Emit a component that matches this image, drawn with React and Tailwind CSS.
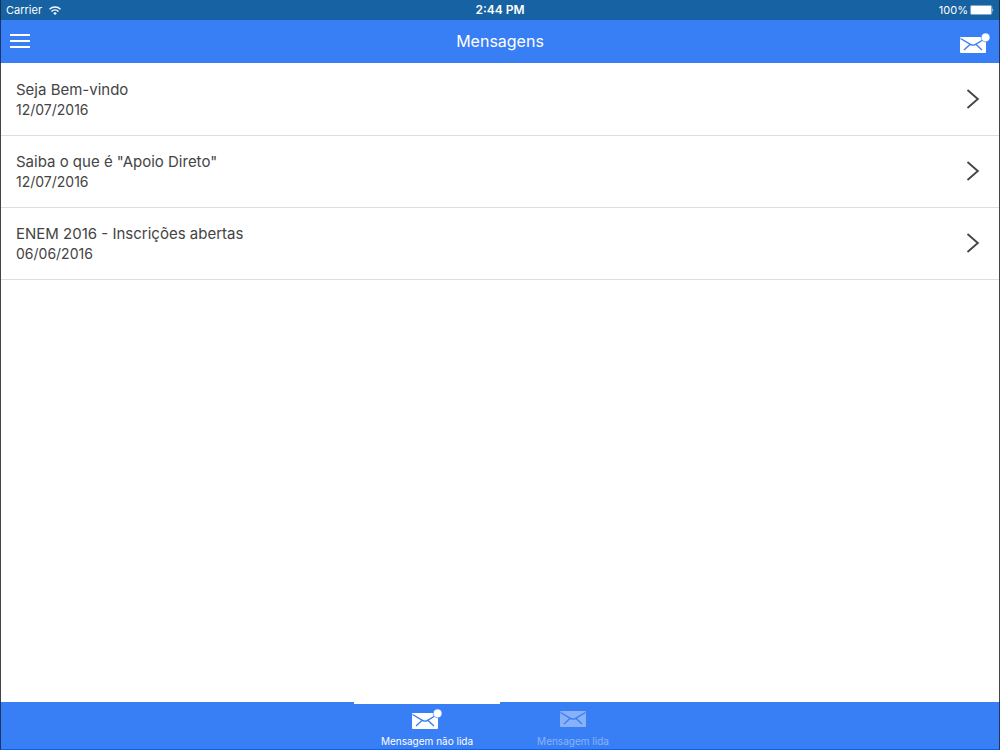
const messages = [
  { title: 'Seja Bem-vindo', date: '12/07/2016' },
  { title: 'Saiba o que é "Apoio Direto"', date: '12/07/2016' },
  { title: 'ENEM 2016 - Inscrições abertas', date: '06/06/2016' },
];

const tabs = [
  { label: 'Mensagem não lida', unread: true, active: true },
  { label: 'Mensagem lida', unread: false, active: false },
];

function Envelope() {
  return (
    <>
      <rect x="0" y="0" width="26" height="16" rx="1" fill="#fff" />
      <path
        d="M0.5 1.5 L10.5 7.4 Q13 9 15.5 7.4 L25.5 1.5 M4 13 L10.2 7.2 M22 13 L15.8 7.2"
        fill="none"
        stroke="#387ef5"
        strokeWidth="1.3"
      />
    </>
  );
}

function UnreadMailIcon() {
  return (
    <svg width="30" height="20" viewBox="0 0 30 20" aria-hidden="true">
      <g transform="translate(0 4)">
        <Envelope />
      </g>
      <circle cx="25.6" cy="4.4" r="4.4" fill="#fff" stroke="#387ef5" strokeWidth="0.6" />
    </svg>
  );
}

function ReadMailIcon() {
  return (
    <svg width="26" height="16" viewBox="0 0 26 16" aria-hidden="true">
      <Envelope />
    </svg>
  );
}

function WifiIcon() {
  return (
    <svg width="12" height="9" viewBox="0 0 12 9" aria-hidden="true">
      <path
        d="M0.5 3.2 A7.8 7.8 0 0 1 11.5 3.2 M2.5 5.4 A5 5 0 0 1 9.5 5.4"
        fill="none"
        stroke="#fff"
        strokeWidth="1.4"
      />
      <path d="M6 9 L4.2 7.2 A2.6 2.6 0 0 1 7.8 7.2 Z" fill="#fff" />
    </svg>
  );
}

function BatteryIcon() {
  return (
    <svg width="24" height="10" viewBox="0 0 24 10" aria-hidden="true">
      <rect x="0.4" y="0.4" width="21.4" height="9.2" rx="1.6" fill="none" stroke="#fff" strokeOpacity="0.7" strokeWidth="0.7" />
      <rect x="1" y="1" width="20.2" height="8" rx="1" fill="#fff" />
      <path d="M22.5 3.2 Q24 5 22.5 6.8 Z" fill="#fff" />
    </svg>
  );
}

function StatusBar() {
  return (
    <div className="grid h-5 grid-cols-3 items-center border-x border-[#10304c] bg-[#1762a3] px-[5px] text-[11px] text-white">
      <div className="flex items-center gap-[7px]">
        <span>Carrier</span>
        <WifiIcon />
      </div>
      <span className="text-center text-xs font-semibold">2:44 PM</span>
      <div className="flex items-center justify-end gap-0.5">
        <span>100%</span>
        <BatteryIcon />
      </div>
    </div>
  );
}

function NavBar() {
  return (
    <header className="flex h-[43px] items-center justify-between border-x border-[#1d3566] bg-[#387ef5] px-2 pb-px text-white">
      <button type="button" aria-label="Menu" className="flex w-8 items-center">
        <svg width="22" height="16" viewBox="0 0 22 16" aria-hidden="true">
          <path d="M1 2 H21 M1 8 H21 M1 14 H21" stroke="#fff" strokeWidth="2" />
        </svg>
      </button>
      <h1 className="text-base">Mensagens</h1>
      <button type="button" aria-label="Mensagens não lidas" className="flex w-8 items-center justify-center pt-1">
        <UnreadMailIcon />
      </button>
    </header>
  );
}

function MessageRow({ title, date }) {
  return (
    <li className="border-b border-[#dddddd]">
      <a href="#" className="flex items-center justify-between pt-[15px] pr-5 pb-4 pl-[15px]">
        <div>
          <h2 className="text-[15px] leading-[22px]">{title}</h2>
          <p className="text-sm leading-[18px]">{date}</p>
        </div>
        <svg width="13" height="20" viewBox="0 0 13 20" aria-hidden="true">
          <path d="M1.5 1 L11.8 10 L1.5 19" fill="none" stroke="#444" strokeWidth="1.8" />
        </svg>
      </a>
    </li>
  );
}

function TabBar() {
  return (
    <nav className="flex h-12 justify-center border-x border-[#1d3566] bg-[#387ef5] text-white shadow-[inset_0_-1px_0_#0c60ee]">
      {tabs.map((tab) => (
        <button
          key={tab.label}
          type="button"
          className={`flex w-[146px] flex-col items-center border-t-2 pt-[5px] ${
            tab.active ? 'border-white' : 'border-transparent'
          }`}
        >
          <span className={`flex flex-col items-center gap-1 ${tab.active ? '' : 'opacity-40'}`}>
            <span className="flex h-5 items-center">
              {tab.unread ? <UnreadMailIcon /> : <ReadMailIcon />}
            </span>
            <span className="text-[10px] leading-4">{tab.label}</span>
          </span>
        </button>
      ))}
    </nav>
  );
}

export default function App() {
  return (
    <div className="flex min-h-screen flex-col bg-white font-['Inter',sans-serif] text-[#444]">
      <StatusBar />
      <NavBar />
      <main className="flex-1 border-x border-[#444]">
        <ul className="pt-px">
          {messages.map((message) => (
            <MessageRow key={message.title} {...message} />
          ))}
        </ul>
      </main>
      <TabBar />
    </div>
  );
}
